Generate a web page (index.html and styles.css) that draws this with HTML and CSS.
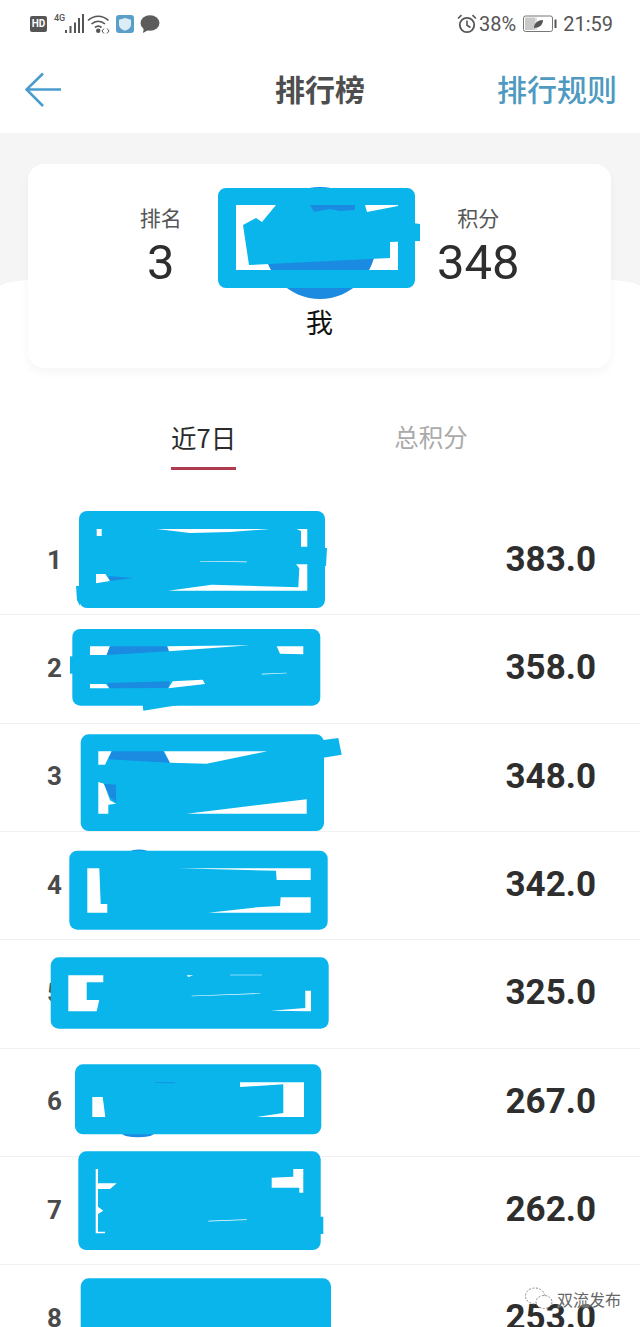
FILE: index.html
```html
<!DOCTYPE html>
<html lang="zh-CN">
<head>
  <meta charset="UTF-8">
  <title>排行榜</title>
  <link rel="stylesheet" href="styles.css">
</head>
<body>
  <div class="page">
    <div class="statusbar">
      <div class="status-left">
        <span class="hd">HD</span>
        <span class="net">4G</span>
        <svg class="signal" width="20" height="20" viewBox="0 0 20 20">
          <rect x="0" y="16" width="2" height="3" fill="#555"/>
          <rect x="4.5" y="12" width="2" height="7" fill="#555"/>
          <rect x="9" y="8.5" width="2" height="10.5" fill="#555"/>
          <rect x="13" y="4" width="2" height="15" fill="#555"/>
          <rect x="17" y="0" width="2" height="19" fill="#555"/>
        </svg>
        <svg class="wifi" width="24" height="20" viewBox="0 0 24 20">
          <path d="M1 6.5C7 0.8 15.5 0.8 21.5 6.5M4.5 10C8.5 6.3 14 6.3 18 10M8 13.5C10 11.8 12.5 11.8 14.5 13.5" fill="none" stroke="#555" stroke-width="1.7"/>
          <circle cx="11.2" cy="16.8" r="2.2" fill="#555"/>
          <path d="M17 14.5l-2 2.5 2 2.5M20 14.5l2 2.5-2 2.5" fill="none" stroke="#555" stroke-width="1"/>
        </svg>
        <svg class="shield" width="18" height="18" viewBox="0 0 18 18">
          <rect width="18" height="18" rx="3" fill="#5a9fc9"/>
          <path d="M9 3L15 4.8V9.5C15 12.8 12 14.8 9 15.8C6 14.8 3 12.8 3 9.5V4.8Z" fill="#dcecf5"/>
        </svg>
        <svg class="bubble" width="20" height="18" viewBox="0 0 20 18">
          <ellipse cx="10" cy="8" rx="9.5" ry="7.8" fill="#5c5c5c"/>
          <path d="M4 12L3 18L10 14Z" fill="#5c5c5c"/>
        </svg>
      </div>
      <div class="status-right">
        <svg class="alarm" width="20" height="20" viewBox="0 0 20 20">
          <circle cx="10" cy="11" r="7.2" fill="none" stroke="#555" stroke-width="1.8"/>
          <path d="M10 6.5V11.3L13.5 13.5M1 4.5L4.5 1.2M19 4.5L15.5 1.2" fill="none" stroke="#555" stroke-width="1.6"/>
        </svg>
        <span class="percent">38%</span>
        <svg class="battery" width="34" height="18" viewBox="0 0 34 18">
          <rect x="0.5" y="1" width="29" height="15.5" rx="2" fill="#fff" stroke="#777"/>
          <rect x="2" y="2.5" width="10" height="12.5" fill="#c9c9c9"/>
          <rect x="12" y="2.5" width="2" height="12.5" fill="#dfdfdf"/>
          <path d="M11 13C11 8 15 5 20 5C20 10 16 13 11 13Z" fill="#555"/>
          <rect x="31.5" y="4.5" width="2" height="8.5" fill="#555"/>
        </svg>
        <span class="clock">21:59</span>
      </div>
    </div>

    <div class="navbar">
      <svg class="back" width="36" height="36" viewBox="0 0 36 36">
        <path d="M18 1.5L1.5 17.5L18 34M1.5 17.5H36" fill="none" stroke="#4a9ccf" stroke-width="2.6"/>
      </svg>
      <div class="nav-title">排行榜</div>
      <div class="nav-link">排行规则</div>
    </div>

    <div class="summary">
      <div class="card">
        <div class="stat">
          <div class="stat-label">排名</div>
          <div class="stat-num">3</div>
        </div>
        <div class="me">
          <svg class="me-avatar" width="204" height="115" viewBox="218 187 204 115">
            <circle cx="320" cy="243" r="56" fill="#1a8be0"/>
            <path fill-rule="evenodd" d="M226 188H407a8 8 0 0 1 8 8V280a8 8 0 0 1-8 8H226a8 8 0 0 1-8-8V196a8 8 0 0 1 8-8ZM236 205V270H398V205Z" fill="#0ab5ec"/>
            <polygon points="243,225 256,218 262,222 276,205 310,205 314,212 330,209 340,211 355,210 355,205 365,205 367,212 398,206 398,221 420,224 420,241 390,242 390,258 249,265" fill="#0ab5ec"/>
          </svg>
          <div class="me-name">我</div>
        </div>
        <div class="stat">
          <div class="stat-label">积分</div>
          <div class="stat-num">348</div>
        </div>
      </div>
    </div>

    <div class="tabs">
      <div class="tab tab-active">近7日</div>
      <div class="tab">总积分</div>
    </div>

    <div class="list">
      <div class="row">
        <span class="rank">1</span>
        <span class="score">383.0</span>
        <svg class="scribble" viewBox="0 507 640 108.33">
          <polygon points="76,586 80,586 80,606 77,600" fill="#0ab5ec"/>
          <polygon points="325,548 327,548 326,566 325,566" fill="#0ab5ec"/>
          <rect x="79" y="511" width="246" height="97" rx="8" fill="#0ab5ec"/>
          <rect x="96.7" y="529" width="5" height="7" fill="#fff"/>
          <polygon points="156.7,529 270,529 230,532 190,533" fill="#fff"/>
          <polygon points="296.7,529 307.3,529 307.3,546.7 301,546.7 301,531" fill="#fff"/>
          <polygon points="296,564.3 307.3,564.3 307.3,590.7 168.3,590.7 211.7,584.7 298.3,587.3 299.3,568.3" fill="#fff"/>
          <polygon points="96,574 105.3,574 110,581 96,583.3" fill="#fff"/>
          <polygon points="108.3,576 133.3,578 110,581" fill="#1a8be0"/>
          <polygon points="200,561 246.7,561.5 246.7,562.3 200,561.6" fill="#fff"/>
        </svg>
      </div>
      <div class="row">
        <span class="rank">2</span>
        <span class="score">358.0</span>
        <svg class="scribble" viewBox="0 615.33 640 108.33">
          <polygon points="70,656.7 73,656.7 73,674 70,674" fill="#0ab5ec"/>
          <polygon points="142.7,705 180,705 143.3,711" fill="#0ab5ec"/>
          <rect x="72.3" y="629.3" width="248" height="76.7" rx="8" fill="#0ab5ec"/>
          <polygon points="90,646.7 110,646.7 106.7,655.3 90,655.3" fill="#fff"/>
          <polygon points="110,646.7 166.7,646.7 169,651.7 106.7,655.3" fill="#1a8be0"/>
          <polygon points="167.3,646.7 250,645.7 169,651.7" fill="#fff"/>
          <polygon points="276.7,646.7 303.3,646.7 303.3,654.7 280,654" fill="#fff"/>
          <polygon points="90,684.3 106,684.3 109.3,688.7 90,688.7" fill="#fff"/>
          <polygon points="107.3,683.3 170,681.7 168.3,688.3 109.3,688.7" fill="#1a8be0"/>
          <polygon points="172.7,681.7 202.7,680 205,684.3 168.3,688.7" fill="#fff"/>
          <polygon points="261.7,674 286.7,673 286.7,673.6 261.7,674.8" fill="#fff"/>
        </svg>
      </div>
      <div class="row">
        <span class="rank">3</span>
        <span class="score">348.0</span>
        <svg class="scribble" viewBox="0 723.67 640 108.33">
          <polygon points="321.7,740 338.3,737.7 341.7,754.3 321.7,757.7" fill="#0ab5ec"/>
          <rect x="80.7" y="734" width="243.3" height="96.7" rx="8" fill="#0ab5ec"/>
          <polygon points="98.3,751 111.7,751 105,764.3 98.3,764.3" fill="#fff"/>
          <polygon points="111.7,751 163.3,751 170,762.3 108.3,759" fill="#1a8be0"/>
          <polygon points="164,751 267.3,751 206.7,763.3 170,762.3" fill="#fff"/>
          <polygon points="98.3,781.7 104,783.3 110,800 116,803.3 108.3,804.3 108.3,813.3 98.3,813.3" fill="#fff"/>
          <polygon points="104,783.3 116,784.3 116,801.7 110,796.7" fill="#1a8be0"/>
          <polygon points="186.7,813.3 306.7,799 306.7,813.3" fill="#fff"/>
        </svg>
      </div>
      <div class="row">
        <span class="rank">4</span>
        <span class="score">342.0</span>
        <svg class="scribble" viewBox="0 832 640 108.33">
          <ellipse cx="139" cy="852" rx="9" ry="2.5" fill="#1a8be0"/>
          <rect x="69.3" y="850.7" width="258.4" height="79" rx="8" fill="#0ab5ec"/>
          <polygon points="87.3,868.3 99.3,868.3 100.7,904 107.3,904 107.3,912.7 87.3,912.7" fill="#fff"/>
          <polygon points="178.3,868.3 310.7,868.3 310.7,880 276.7,880 276,870.7" fill="#fff"/>
          <polygon points="208.3,912.7 256.7,907.3 280,906 280.7,897.3 310.7,897.3 310.7,912.7" fill="#fff"/>
        </svg>
      </div>
      <div class="row">
        <span class="rank">5</span>
        <span class="score">325.0</span>
        <svg class="scribble" viewBox="0 940.33 640 108.33">
          <rect x="50.7" y="957.7" width="278" height="71.3" rx="8" fill="#0ab5ec"/>
          <polygon points="68.3,975.7 103.3,975.7 103.3,982.7 86.7,982.7 86.7,1000.3 99.3,1000.3 96.7,1011.7 68.3,1011.7" fill="#fff"/>
          <polygon points="186.7,975.7 193.3,975.7 188.3,977.3" fill="#fff"/>
          <polygon points="230,975 261.7,975 261.7,975.5 230,975.6" fill="#fff"/>
          <polygon points="191.7,996 260,993.5 260,994.2 191.7,996.7" fill="#fff"/>
          <polygon points="311,991 311,1011.7 270.7,1011 305.3,1008.3 305.3,991" fill="#fff"/>
        </svg>
      </div>
      <div class="row">
        <span class="rank">6</span>
        <span class="score">267.0</span>
        <svg class="scribble" viewBox="0 1048.67 640 108.33">
          <ellipse cx="138" cy="1133.5" rx="15.5" ry="3.5" fill="#1a8be0"/>
          <rect x="75" y="1064" width="246.3" height="70" rx="8" fill="#0ab5ec"/>
          <polygon points="92.3,1096.7 102.7,1096.7 104,1106.7 105.3,1116.7 92.3,1116.7" fill="#fff"/>
          <polygon points="240,1082 304,1082 304,1116.7 256.7,1116.7 283.3,1112.7 283.3,1084 240,1086.7" fill="#fff"/>
          <polygon points="155,1082 175,1082 175,1083 155,1082.6" fill="#1a8be0"/>
        </svg>
      </div>
      <div class="row">
        <span class="rank">7</span>
        <span class="score">262.0</span>
        <svg class="scribble" viewBox="0 1157 640 108.33">
          <polygon points="319,1216.7 323.3,1216.7 323.3,1234 319,1234" fill="#0ab5ec"/>
          <rect x="78.3" y="1151.3" width="242.4" height="98.7" rx="8" fill="#0ab5ec"/>
          <polygon points="95.7,1169 98,1169 98,1183.3 116.7,1183.3 110,1189 98,1189 98,1206.7 103.3,1210.7 98,1214 98,1231.7 105,1231.7 105,1233.3 95.7,1233.3" fill="#fff"/>
          <polygon points="293.3,1169 303.3,1169 303.3,1192.7 299.3,1192.7 299.3,1187.7 271.7,1187.7 271.7,1177.7 293.3,1176.7" fill="#fff"/>
          <polygon points="208.3,1220.7 246.7,1219.3 246.7,1220 208.3,1221.4" fill="#fff"/>
        </svg>
      </div>
      <div class="row">
        <span class="rank">8</span>
        <span class="score">253.0</span>
        <svg class="scribble" viewBox="0 1265.33 640 108.33">
          <rect x="80.7" y="1278.7" width="250.3" height="100" rx="8" fill="#0ab5ec"/>
        </svg>
      </div>
    </div>

    <div class="watermark">
      <svg width="30" height="26" viewBox="0 0 30 26">
        <ellipse cx="11" cy="10" rx="9.5" ry="8" fill="none" stroke="#888" stroke-width="1" stroke-dasharray="2 1.5"/>
        <ellipse cx="20" cy="16" rx="8" ry="6.5" fill="#fff" stroke="#888" stroke-width="1" stroke-dasharray="2 1.5"/>
      </svg>
      <span>双流发布</span>
    </div>
  </div>
</body>
</html>
```

FILE: styles.css
```css
html, body {
  margin: 0;
  padding: 0;
  background: #fff;
  font-family: "Noto Sans CJK SC", "Noto Sans", sans-serif;
}

.page {
  position: relative;
  width: 640px;
  height: 1327px;
  overflow: hidden;
}

/* status bar */
.statusbar {
  height: 44px;
  padding: 4px 27px 0 30px;
  box-sizing: border-box;
  display: flex;
  justify-content: space-between;
  align-items: center;
  color: #555;
}

.status-left, .status-right {
  display: flex;
  align-items: center;
}

.hd {
  width: 17px;
  height: 16px;
  border-radius: 2px;
  background: #555;
  color: #fff;
  font-family: Roboto, sans-serif;
  font-size: 10px;
  font-weight: 700;
  line-height: 16px;
  text-align: center;
}

.net {
  width: 10px;
  margin: -12px 0 0 7px;
  font-family: Roboto, sans-serif;
  font-size: 9px;
  font-weight: 500;
  line-height: 10px;
}

.signal {
  margin-left: 1px;
}

.wifi {
  margin-left: 2px;
}

.shield {
  margin-left: 5px;
}

.bubble {
  margin-left: 6px;
}

.percent, .clock {
  font-family: Roboto, sans-serif;
  font-size: 20px;
  line-height: 24px;
}

.percent {
  margin-left: 2px;
}

.battery {
  margin-left: 7px;
}

.clock {
  margin-left: 6px;
}

/* nav */
.navbar {
  position: relative;
  height: 89px;
  padding: 0 23px 2px 25px;
  box-sizing: border-box;
  display: flex;
  align-items: center;
  justify-content: space-between;
}

.back {
  margin-top: 5px;
}

.nav-title {
  position: absolute;
  left: 0;
  right: 0;
  text-align: center;
  color: #4e4e4e;
  font-size: 30px;
  font-weight: 700;
}

.nav-link {
  color: #4f9ac0;
  font-size: 30px;
  font-weight: 500;
}

/* summary card */
.summary {
  position: relative;
  height: 235px;
  padding-top: 31px;
  box-sizing: border-box;
  background: #f5f5f5;
}

.summary::before {
  content: "";
  position: absolute;
  left: 0;
  right: 0;
  top: 147px;
  bottom: 0;
  background: #fff;
  border-radius: 36px 36px 0 0 / 7px 7px 0 0;
}

.card {
  position: relative;
  width: 583px;
  height: 204px;
  margin-left: 28px;
  padding: 23px 76px 0;
  box-sizing: border-box;
  display: grid;
  grid-template-columns: 1fr 204px 1fr;
  background: #fff;
  border-radius: 16px;
  box-shadow: 0 5px 10px rgba(0, 0, 0, 0.04);
}

.stat {
  padding-top: 16px;
  text-align: center;
}

.stat-label {
  color: #555;
  font-size: 21px;
  line-height: 28px;
}

.stat-num {
  margin-top: 5px;
  color: #2e2e2e;
  font-family: Roboto, sans-serif;
  font-size: 49px;
  line-height: 54px;
}

.me {
  text-align: center;
}

.me-avatar {
  display: block;
}

.me-name {
  color: #111;
  font-size: 27px;
  line-height: 38px;
  margin-top: 1px;
}

/* tabs */
.tabs {
  height: 139px;
  padding: 51px 0 0 171px;
  box-sizing: border-box;
  display: flex;
  gap: 158px;
}

.tab {
  height: 51px;
  box-sizing: border-box;
  color: #aaa;
  font-size: 24.5px;
  line-height: 36px;
}

.tab-active {
  color: #2b2b2b;
  font-size: 25.5px;
  border-bottom: 3px solid #b03a50;
}

/* list */
.row {
  position: relative;
  height: 108.33px;
  padding: 0 44px 2px 47px;
  box-sizing: border-box;
  display: flex;
  justify-content: space-between;
  align-items: center;
  border-bottom: 1px solid #f1f1f1;
  font-family: Roboto, sans-serif;
  font-weight: 700;
}

.rank {
  color: #4a4a4a;
  font-size: 26px;
}

.score {
  color: #2e2e2e;
  font-size: 35px;
}

.scribble {
  position: absolute;
  left: 0;
  top: 0;
  width: 640px;
  height: 108.33px;
  overflow: visible;
}

.watermark {
  position: absolute;
  left: 524px;
  top: 1286px;
  display: flex;
  align-items: center;
  gap: 3px;
  color: #666;
  font-size: 16px;
  text-shadow: 0 0 2px #fff;
}
```
